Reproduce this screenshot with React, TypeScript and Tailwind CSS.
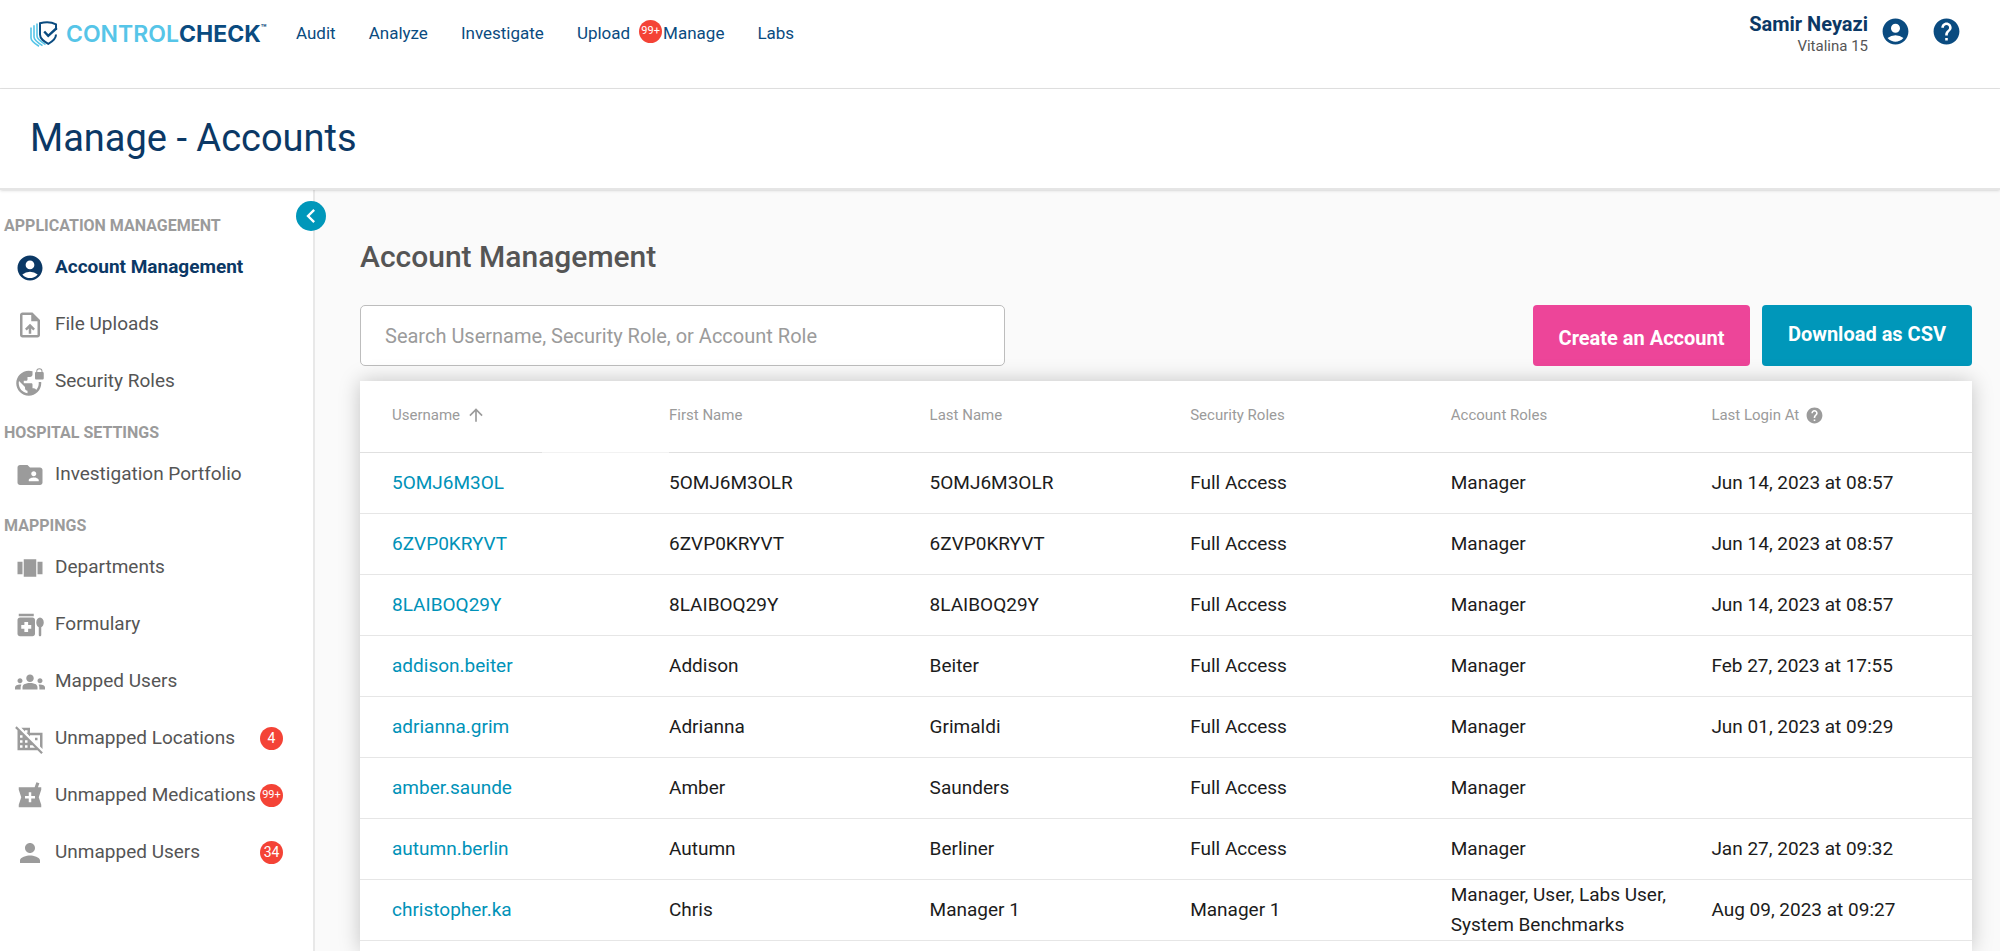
import type { IconType } from 'react-icons'
import {
  MdAccountCircle,
  MdArrowUpward,
  MdChevronLeft,
  MdDomainDisabled,
  MdFolderShared,
  MdGroups,
  MdHelp,
  MdLocalPharmacy,
  MdMedicationLiquid,
  MdPerson,
  MdUploadFile,
  MdViewCarousel,
  MdVpnLock,
} from 'react-icons/md'
import clsx from 'clsx'

type MenuItem = { label: string; icon: IconType; badge?: string; active?: boolean }

const menu: { title: string; items: MenuItem[] }[] = [
  {
    title: 'Application Management',
    items: [
      { label: 'Account Management', icon: MdAccountCircle, active: true },
      { label: 'File Uploads', icon: MdUploadFile },
      { label: 'Security Roles', icon: MdVpnLock },
    ],
  },
  {
    title: 'Hospital Settings',
    items: [{ label: 'Investigation Portfolio', icon: MdFolderShared }],
  },
  {
    title: 'Mappings',
    items: [
      { label: 'Departments', icon: MdViewCarousel },
      { label: 'Formulary', icon: MdMedicationLiquid },
      { label: 'Mapped Users', icon: MdGroups },
      { label: 'Unmapped Locations', icon: MdDomainDisabled, badge: '4' },
      { label: 'Unmapped Medications', icon: MdLocalPharmacy, badge: '99+' },
      { label: 'Unmapped Users', icon: MdPerson, badge: '34' },
    ],
  },
]

const accounts = [
  ['5OMJ6M3OL', '5OMJ6M3OLR', '5OMJ6M3OLR', 'Full Access', 'Manager', 'Jun 14, 2023 at 08:57'],
  ['6ZVP0KRYVT', '6ZVP0KRYVT', '6ZVP0KRYVT', 'Full Access', 'Manager', 'Jun 14, 2023 at 08:57'],
  ['8LAIBOQ29Y', '8LAIBOQ29Y', '8LAIBOQ29Y', 'Full Access', 'Manager', 'Jun 14, 2023 at 08:57'],
  ['addison.beiter', 'Addison', 'Beiter', 'Full Access', 'Manager', 'Feb 27, 2023 at 17:55'],
  ['adrianna.grim', 'Adrianna', 'Grimaldi', 'Full Access', 'Manager', 'Jun 01, 2023 at 09:29'],
  ['amber.saunde', 'Amber', 'Saunders', 'Full Access', 'Manager', ''],
  ['autumn.berlin', 'Autumn', 'Berliner', 'Full Access', 'Manager', 'Jan 27, 2023 at 09:32'],
  ['christopher.ka', 'Chris', 'Manager 1', 'Manager 1', 'Manager, User, Labs User, System Benchmarks', 'Aug 09, 2023 at 09:27'],
]

function Badge({ children }: { children: string }) {
  return (
    <span
      className={clsx(
        'flex size-[23px] shrink-0 items-center justify-center rounded-full bg-[#f44336] text-white',
        children.length > 2 ? 'text-[11px]' : 'text-[14px]',
      )}
    >
      {children}
    </span>
  )
}

function Logo() {
  return (
    <a href="#" className="flex items-center gap-2">
      <svg width="28" height="27" viewBox="0 0 28 27" fill="none" aria-hidden="true">
        <path d="M1 7.500v10.500c0 2.500 3.500 5.500 8 8.300" stroke="#56c5e8" strokeWidth="1.600" />
        <path d="M4 5.300v11.700c0 3 4 5.800 8.500 8.600" stroke="#56c5e8" strokeWidth="1.600" />
        <path d="M7 3.600v12.400c0 3.300 4 5.700 8.500 8.600" stroke="#56c5e8" strokeWidth="1.600" />
        <path
          d="M26 10V4.300C21.500 2 15.500 1.800 10 3.200v11.300c0 4.500 4 6.900 8.300 9.300 4.200-2.300 7.700-4.600 7.700-9.300"
          stroke="#0a4b80"
          strokeWidth="2"
        />
        <path d="M14.200 11.500l4 4.300L26.800 8" stroke="#0a4b80" strokeWidth="2.400" />
      </svg>
      <span className="flex font-[Inter,sans-serif] text-[23px] leading-7 font-bold text-[#0a4b80]">
        <span className="font-semibold text-[#56c5e8]">CONTROL</span>CHECK
        <span className="text-[9px] leading-4">™</span>
      </span>
    </a>
  )
}

function Header() {
  return (
    <header className="flex h-[89px] items-start justify-between border-b border-[#e2e2e2] bg-white pr-[38px] pl-[30px]">
      <div className="flex h-[67px] items-center">
        <div className="w-[266px]">
          <Logo />
        </div>
        <nav className="flex items-center gap-[33px] text-[17px] text-[#0a4b80]">
          <a href="#">Audit</a>
          <a href="#">Analyze</a>
          <a href="#">Investigate</a>
          <a href="#" className="relative">
            Upload
            <span className="absolute -top-px -right-8">
              <Badge>99+</Badge>
            </span>
          </a>
          <a href="#">Manage</a>
          <a href="#">Labs</a>
        </nav>
      </div>
      <div className="flex items-start pt-3">
        <div className="mr-3 text-right">
          <div className="text-xl leading-6 font-bold text-[#0b3865]">Samir Neyazi</div>
          <div className="text-[15px] leading-5 text-[#555]">Vitalina 15</div>
        </div>
        <button type="button" aria-label="Account" className="mt-1 mr-5">
          <MdAccountCircle size={31} color="#0a4b80" />
        </button>
        <button type="button" aria-label="Help" className="mt-1">
          <MdHelp size={31} color="#0a4b80" />
        </button>
      </div>
    </header>
  )
}

function Sidebar() {
  return (
    <aside className="relative w-[315px] shrink-0 border-r-2 border-[#e8e8e8] bg-white pt-[13px]">
      <button
        type="button"
        aria-label="Collapse menu"
        className="absolute top-[11px] -right-[13px] flex size-[30px] items-center justify-center rounded-full bg-[#0097ba] text-white"
      >
        <MdChevronLeft size={28} />
      </button>
      {menu.map((section) => (
        <section key={section.title}>
          <h2 className="pt-[13px] pb-[3px] pl-1 text-base leading-5 font-bold text-[#9b9b9b] uppercase">
            {section.title}
          </h2>
          <ul>
            {section.items.map(({ label, icon: Icon, badge, active }) => (
              <li key={label}>
                <a
                  href="#"
                  className={clsx(
                    'flex h-[57px] items-center pr-[30px] pl-[15px] text-[19px]',
                    active ? 'font-bold text-[#0b3865]' : 'text-[#555]',
                  )}
                >
                  <Icon size={30} color={active ? '#0b3865' : '#9b9b9b'} className="mr-[10px] shrink-0" />
                  <span className="grow whitespace-nowrap">{label}</span>
                  {badge && <Badge>{badge}</Badge>}
                </a>
              </li>
            ))}
          </ul>
        </section>
      ))}
    </aside>
  )
}

function AccountsTable() {
  const th = 'border-b border-[#e0e0e0] pb-[2px] text-left font-normal'

  return (
    <table className="w-full table-fixed">
      <colgroup>
        <col className="w-[182px]" />
        <col className="w-[127px]" />
        <col />
        <col />
        <col />
        <col />
        <col />
      </colgroup>
      <thead>
        <tr className="h-[71px] text-[15px] text-[#9b9b9b]">
          <th className={clsx(th, 'pl-8')}>
            <button type="button" className="flex items-center gap-[6px]">
              Username <MdArrowUpward size={20} stroke="currentColor" />
            </button>
          </th>
          <td className="border-b border-[#f2f2f2]" />
          <th className={th}>First Name</th>
          <th className={th}>Last Name</th>
          <th className={th}>Security Roles</th>
          <th className={th}>Account Roles</th>
          <th className={th}>
            <span className="flex items-center gap-[6px]">
              Last Login At <MdHelp size={19} />
            </span>
          </th>
        </tr>
      </thead>
      <tbody className="text-[19px] leading-[30px] text-[#1c1c1c]">
        {accounts.map(([username, ...cells]) => (
          <tr key={username} className="h-[61px] border-b border-[#e6e6e6]">
            <td colSpan={2} className="pl-8">
              <a href="#" className="text-[#0092b8]">
                {username}
              </a>
            </td>
            {cells.map((cell, i) => (
              <td key={i}>{cell}</td>
            ))}
          </tr>
        ))}
      </tbody>
    </table>
  )
}

export default function App() {
  return (
    <div className="flex h-screen flex-col overflow-hidden bg-[#fafafa] font-[Roboto,sans-serif]">
      <Header />
      <div className="z-10 border-b-2 border-[#e5e5e5] bg-white py-6 pl-[30px] shadow-sm">
        <h1 className="text-[38px] leading-[51px] text-[#0b3865]">Manage - Accounts</h1>
      </div>
      <div className="flex grow">
        <Sidebar />
        <main className="flex min-w-0 grow flex-col pt-[47px] pr-7 pl-[45px]">
          <h2 className="text-[30px] leading-10 font-medium text-[#555]">Account Management</h2>
          <div className="mt-7 flex gap-3">
            <input
              type="text"
              aria-label="Search accounts"
              placeholder="Search Username, Security Role, or Account Role"
              className="h-[61px] w-2/5 rounded-[5px] border border-[#bdbdbd] bg-white px-6 pt-px text-xl placeholder:text-[#9b9b9b]"
            />
            <button
              type="button"
              className="ml-auto h-[61px] w-[217px] rounded bg-[#ed4599] pt-1 text-xl font-bold text-white"
            >
              Create an Account
            </button>
            <button
              type="button"
              className="h-[61px] w-[210px] rounded bg-[#0097ba] pb-1 text-xl font-bold text-white"
            >
              Download as CSV
            </button>
          </div>
          <div className="mt-[15px] grow bg-white shadow-[0_0_20px_rgba(0,0,0,0.22)]">
            <AccountsTable />
          </div>
        </main>
      </div>
    </div>
  )
}
